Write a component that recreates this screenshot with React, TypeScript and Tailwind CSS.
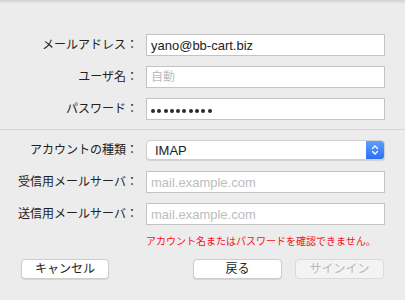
import React from "react";

const FONT = '"Liberation Sans", "Noto Sans CJK JP", sans-serif';

function Label({ children }: { children: React.ReactNode }) {
  return (
    <div className="w-[140px] shrink-0 text-right text-[12px] text-[#222] leading-none pr-[2px]" style={{ fontFamily: FONT }}>
      {children}
    </div>
  );
}

function TextBox({ children }: { children?: React.ReactNode }) {
  return (
    <div className="ml-[6px] w-[239px] h-[22px] bg-white border border-[#c3c3c3] flex items-center px-[4px] text-[13px] leading-none">
      {children}
    </div>
  );
}

export default function App() {
  return (
    <div className="relative w-[405px] h-[300px] bg-[#ececec] overflow-hidden" style={{ fontFamily: FONT }}>
      <div className="absolute top-0 left-0 right-0 h-[4px] bg-gradient-to-b from-[#d2d2d2] to-[#ececec]" />
      <div className="flex flex-col pt-[34px]">
        <div className="flex items-center">
          <Label>メールアドレス：</Label>
          <TextBox>
            <span className="text-[#222]">yano@bb-cart.biz</span>
          </TextBox>
        </div>
        <div className="flex items-center mt-[10px]">
          <Label>ユーザ名：</Label>
          <TextBox>
            <span className="text-[#bdbdbd] text-[12px]">自動</span>
          </TextBox>
        </div>
        <div className="flex items-center mt-[10px]">
          <Label>パスワード：</Label>
          <TextBox>
            <div className="flex items-center gap-[2.3px] pt-[4px]">
              {Array.from({ length: 10 }).map((_, i) => (
                <div key={i} className="w-[4px] h-[4px] rounded-full bg-[#2a2a2a]" />
              ))}
            </div>
          </TextBox>
        </div>
        <div className="mt-[9px] h-px bg-[#d6d6d6]" />
        <div className="flex items-center mt-[10px]">
          <Label>アカウントの種類：</Label>
          <div className="ml-[6px] w-[239px] h-[20px] bg-white rounded-[4px] border border-[#d0d0d0] shadow-[0_1px_1px_rgba(0,0,0,0.12)] flex items-stretch overflow-hidden">
            <div className="flex-1 flex items-center pl-[8px] text-[13px] text-[#222] leading-none">IMAP</div>
            <div className="w-[18px] bg-gradient-to-b from-[#5ea0fc] to-[#2b6ef4] flex items-center justify-center">
              <svg width="8" height="12" viewBox="0 0 8 12" fill="none">
                <path d="M1.5 4.5 L4 2 L6.5 4.5" stroke="white" strokeWidth="1.3" strokeLinecap="round" strokeLinejoin="round" />
                <path d="M1.5 7.5 L4 10 L6.5 7.5" stroke="white" strokeWidth="1.3" strokeLinecap="round" strokeLinejoin="round" />
              </svg>
            </div>
          </div>
        </div>
        <div className="flex items-center mt-[11px]">
          <Label>受信用メールサーバ：</Label>
          <TextBox>
            <span className="text-[#bdbdbd]">mail.example.com</span>
          </TextBox>
        </div>
        <div className="flex items-center mt-[10px]">
          <Label>送信用メールサーバ：</Label>
          <TextBox>
            <span className="text-[#bdbdbd]">mail.example.com</span>
          </TextBox>
        </div>
        <div className="ml-[146px] mt-[12px] text-[10px] leading-none text-[#f4101c]">
          アカウント名またはパスワードを確認できません。
        </div>
        <div className="flex items-center mt-[12px] px-[21px]">
          <button className="w-[88px] h-[20px] bg-white rounded-[4px] border border-[#cdcdcd] shadow-[0_1px_1px_rgba(0,0,0,0.1)] text-[12px] text-[#222] leading-none flex items-center justify-center">
            キャンセル
          </button>
          <div className="flex-1" />
          <button className="w-[89px] h-[20px] bg-white rounded-[4px] border border-[#cdcdcd] shadow-[0_1px_1px_rgba(0,0,0,0.1)] text-[12px] text-[#222] leading-none flex items-center justify-center">
            戻る
          </button>
          <button className="ml-[13px] w-[89px] h-[20px] bg-[#f3f3f3] rounded-[4px] border border-[#dadada] text-[12px] text-[#b9b9b9] leading-none flex items-center justify-center">
            サインイン
          </button>
        </div>
      </div>
    </div>
  );
}
